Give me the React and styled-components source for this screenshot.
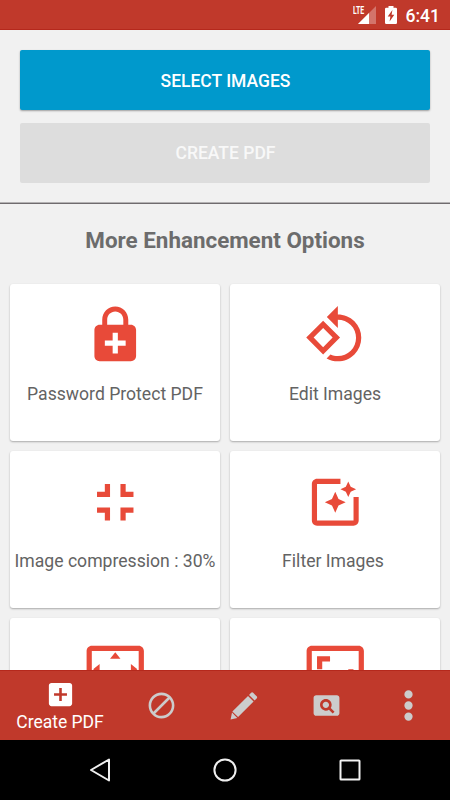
import React from 'react'
import styled, { createGlobalStyle } from 'styled-components';

const GlobalStyle = createGlobalStyle`
  * {
    box-sizing: border-box;
  }
  body {
    margin: 0;
    font-family: Roboto, "Liberation Sans", sans-serif;
    background: #f1f1f1;
  }
`

const options = [
    {
        id: 'password',
        label: 'Password Protect PDF',
        path: 'M18 8h-1V6c0-2.76-2.24-5-5-5S7 3.24 7 6v2H6c-1.1 0-2 .9-2 2v10c0 1.1.9 2 2 2h12c1.1 0 2-.9 2-2V10c0-1.1-.9-2-2-2zM8.9 6c0-1.71 1.39-3.1 3.1-3.1s3.1 1.39 3.1 3.1v2H8.9V6zM16 16h-3v3h-2v-3H8v-2h3v-3h2v3h3v2z'
    },
    {
        id: 'edit',
        label: 'Edit Images',
        path: 'M7.34 6.41L.86 12.9l6.49 6.48 6.49-6.48-6.5-6.49zM3.69 12.9l3.66-3.66L11 12.9l-3.66 3.66-3.65-3.66zm15.67-6.26C17.61 4.88 15.3 4 13 4V.76L8.76 5 13 9.24V6c1.79 0 3.58.68 4.95 2.05 2.73 2.73 2.73 7.17 0 9.9C16.58 19.32 14.79 20 13 20c-.97 0-1.94-.21-2.84-.61l-1.49 1.49C10.02 21.62 11.51 22 13 22c2.3 0 4.61-.88 6.36-2.64 3.52-3.51 3.52-9.21 0-12.72z'
    },
    {
        id: 'compression',
        label: 'Image compression : 30%',
        path: 'M5 16h3v3h2v-5H5v2zm3-8H5v2h5V5H8v3zm6 11h2v-3h3v-2h-5v5zm2-11V5h-2v5h5V8h-3z'
    },
    {
        id: 'filter',
        label: 'Filter Images',
        trailing: '4px',
        path: 'M19.02 10v9H5V5h9V3H5.02c-1.1 0-2 .9-2 2v14c0 1.1.9 2 2 2H19c1.1 0 2-.9 2-2v-9h-1.98zM17 10l.94-2.06L20 7l-2.06-.94L17 4l-.94 2.06L14 7l2.06.94L17 10zm-3.75.75L12 8l-1.25 2.75L8 12l2.75 1.25L12 16l1.25-2.75L16 12l-2.75-1.25z'
    },
    {
        id: 'overscan',
        path: 'M12.01 5.5L10 8h4l-1.99-2.5zM18 10v4l2.5-1.99L18 10zM6 10l-2.5 2.01L6 14v-4zm8 6h-4l2.01 2.5L14 16zm7-13H3c-1.1 0-2 .9-2 2v14c0 1.1.9 2 2 2h18c1.1 0 2-.9 2-2V5c0-1.1-.9-2-2-2zm0 16.01H3V4.99h18v14.02z'
    },
    {
        id: 'ratio',
        path: 'M19 12h-2v3h-3v2h5v-5zM7 9h3V7H5v5h2V9zm14-6H3c-1.1 0-2 .9-2 2v14c0 1.1.9 2 2 2h18c1.1 0 2-.9 2-2V5c0-1.1-.9-2-2-2zm0 16.01H3V4.99h18v14.02z'
    }
]

const tabs = [
    'M12 2C6.5 2 2 6.5 2 12s4.5 10 10 10 10-4.5 10-10S17.5 2 12 2zM4 12c0-4.4 3.6-8 8-8 1.8 0 3.5.6 4.9 1.7L5.7 16.9C4.6 15.5 4 13.8 4 12zm8 8c-1.8 0-3.5-.6-4.9-1.7L18.3 7.1C19.4 8.5 20 10.2 20 12c0 4.4-3.6 8-8 8z',
    'M2 22.8L3.1 17.5L7.2 21.6zM3.4 16.6L15.5 4.6L19.8 8.9L7.8 20.9zM16.3 3.8L17.9 2.2Q18.7 1.4 19.5 2.2L22.2 4.9Q23 5.7 22.2 6.5L20.6 8.1z',
    'M11.5 9C10.12 9 9 10.12 9 11.5s1.12 2.5 2.5 2.5 2.5-1.12 2.5-2.5S12.88 9 11.5 9zM20 4H4c-1.1 0-2 .9-2 2v12c0 1.1.9 2 2 2h16c1.1 0 2-.9 2-2V6c0-1.1-.9-2-2-2zm-3.21 14.21l-2.91-2.91c-.69.44-1.51.7-2.39.7C9.01 16 7 13.99 7 11.5S9.01 7 11.49 7 16 9.01 16 11.49c0 .88-.26 1.69-.7 2.39l2.91 2.9-1.42 1.43z',
    'M12 .2a3.2 3.2 0 1 0 0 6.4a3.2 3.2 0 1 0 0-6.4zM12 8.8a3.2 3.2 0 1 0 0 6.4a3.2 3.2 0 1 0 0-6.4zM12 17.4a3.2 3.2 0 1 0 0 6.4a3.2 3.2 0 1 0 0-6.4z'
]

const Icon = ({ path, size }) => (
    <svg width={size} height={size} viewBox='0 0 24 24' fill='currentColor'>
        <path d={path} />
    </svg>
)

export default function App() {
    return (
        <Screen>
            <GlobalStyle />
            <StatusBar>
                <Signal>
                    <Network>LTE</Network>
                    <svg width='18' height='18' viewBox='0 0 18 18'>
                        <path d='M18 0V18H0z' fill='#fff' opacity='.3' />
                        <path d='M11 7V18H0z' fill='#fff' />
                    </svg>
                </Signal>
                <Battery width='12' height='18' viewBox='0 0 12 18'>
                    <path d='M3.5 0h5v1.8h2.3Q12 1.8 12 3V16.8Q12 18 10.8 18H1.2Q0 18 0 16.8V3Q0 1.8 1.2 1.8H3.5z' fill='#fff' />
                    <path d='M7.4 4L2.7 10.6H5.4L4.6 15.6L9.3 8.8H6.6z' fill='#c0392b' />
                </Battery>
                <Clock>6:41</Clock>
            </StatusBar>
            <Content>
                <Actions>
                    <ActionButton>SELECT IMAGES</ActionButton>
                    <ActionButton disabled>CREATE PDF</ActionButton>
                </Actions>
                <Title>More Enhancement Options</Title>
                <Grid>
                    {options.map((item) => (
                        <Card key={item.id}>
                            <Icon path={item.path} size={62.5} />
                            {item.label && <CardText $trailing={item.trailing}>{item.label}</CardText>}
                        </Card>
                    ))}
                </Grid>
            </Content>
            <TabBar>
                <Tab $active>
                    <Icon path='M19 3H5c-1.11 0-2 .9-2 2v14c0 1.1.89 2 2 2h14c1.1 0 2-.9 2-2V5c0-1.1-.9-2-2-2zm-2 10h-4v4h-2v-4H7v-2h4V7h2v4h4v2z' size={31} />
                    <TabText>Create PDF</TabText>
                </Tab>
                {tabs.map((path) => (
                    <Tab key={path}>
                        <Icon path={path} size={31} />
                    </Tab>
                ))}
            </TabBar>
            <SystemBar>
                <svg width='26' height='26' viewBox='0 0 26 26'>
                    <path d='M22 2.5V23.5L4 13z' />
                </svg>
                <svg width='26' height='26' viewBox='0 0 26 26'>
                    <circle cx='13' cy='13' r='10.6' />
                </svg>
                <svg width='26' height='26' viewBox='0 0 26 26'>
                    <rect x='3.5' y='3.5' width='19' height='19' rx='.6' />
                </svg>
            </SystemBar>
        </Screen>
    )
}

const Screen = styled.div`
    display: flex;
    flex-direction: column;
    width: 450px;
    height: 800px;
    overflow: hidden;
    background: #f1f1f1;
`
const StatusBar = styled.div`
    display: flex;
    align-items: center;
    justify-content: flex-end;
    flex: none;
    height: 30px;
    padding: 1px 10px 0 0;
    color: #fff;
    background: #c0392b;
    border-bottom: 1px solid #b5281c;
`
const Signal = styled.div`
    position: relative;
    display: flex;
    margin-right: 9px;
`
const Network = styled.span`
    position: absolute;
    left: -5px;
    top: -1px;
    font-size: 11.5px;
    line-height: 10px;
    font-weight: 700;
    transform: scaleX(.6);
    transform-origin: left;
`
const Battery = styled.svg`
    margin-right: 9px;
`
const Clock = styled.span`
    padding-top: 1px;
    font-size: 17.5px;
    font-weight: 500;
`
const Content = styled.div`
    flex: 1;
    min-height: 0;
    overflow: hidden;
`
const Actions = styled.div`
    display: flex;
    flex-direction: column;
    gap: 13px;
    height: 174px;
    padding: 20px 20px 0;
    border-bottom: 1px solid #6f6b6e;
    box-shadow: inset 0 -1px 0 #b4b2b3;
`
const ActionButton = styled.button`
    height: 60px;
    padding: 1px 0 0 1px;
    border: none;
    border-radius: 2px;
    font-family: inherit;
    font-size: 17.5px;
    font-weight: 500;
    color: #fff;
    background: #0099cc;
    box-shadow: 0 1px 2px rgba(0, 0, 0, .35);
    &:disabled{
        height: 59.5px;
        color: #f8f8f8;
        background: #dddddd;
        box-shadow: none;
    }
`
const Title = styled.h2`
    margin: 0;
    height: 80px;
    padding-top: 22px;
    font-size: 22.4px;
    line-height: 28px;
    font-weight: 700;
    text-align: center;
    color: #6c6c6c;
`
const Grid = styled.div`
    display: grid;
    grid-template-columns: 1fr 1fr;
    grid-auto-rows: 157px;
    gap: 10px;
    padding: 0 10px;
`
const Card = styled.div`
    display: flex;
    flex-direction: column;
    align-items: center;
    padding-top: 20px;
    border-radius: 3px;
    color: #e84a39;
    background: #fff;
    box-shadow: 0 1px 2px rgba(0, 0, 0, .3);
`
const CardText = styled.span`
    margin-top: 16.5px;
    padding-right: ${({ $trailing }) => $trailing || '0'};
    font-size: 17.6px;
    line-height: 22px;
    white-space: nowrap;
    color: #636363;
`
const TabBar = styled.div`
    display: flex;
    flex: none;
    height: 70px;
    background: #c0392b;
    border-top: 1px solid #b5281c;
`
const Tab = styled.div`
    display: flex;
    flex-direction: column;
    align-items: center;
    justify-content: center;
    flex: ${({ $active }) => $active ? '0 0 120px' : '1'};
    padding-bottom: ${({ $active }) => $active ? '0' : '1px'};
    color: ${({ $active }) => $active ? '#fff' : '#cccccc'};
`
const TabText = styled.span`
    margin-top: 1px;
    font-size: 17.5px;
    line-height: 22px;
`
const SystemBar = styled.div`
    display: flex;
    align-items: center;
    justify-content: space-between;
    flex: none;
    height: 60px;
    padding: 0 87px;
    background: #000;
    svg{
        fill: none;
        stroke: #f0f0f0;
        stroke-width: 2;
        stroke-linejoin: round;
    }
`
